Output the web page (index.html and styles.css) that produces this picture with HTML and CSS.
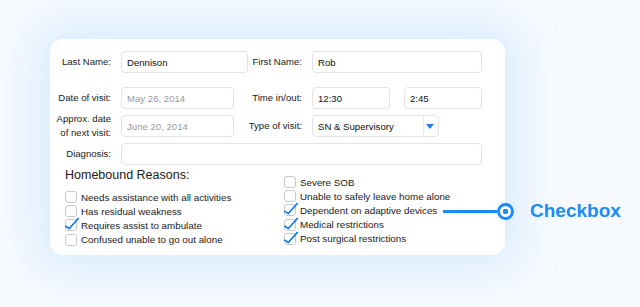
FILE: index.html
```html
<!DOCTYPE html>
<html lang="en">
<head>
    <meta charset="UTF-8">
    <meta name="viewport" content="width=device-width, initial-scale=1.0">
    <title>Visit Form</title>
    <link rel="stylesheet" href="styles.css">
</head>
<body>
    <div class="stage">
        <div class="card">
            <div class="form-grid">
                <div class="label">Last Name:</div>
                <div class="input">Dennison</div>
                <div class="label">First Name:</div>
                <div class="input">Rob</div>

                <div class="label">Date of visit:</div>
                <div class="input input-short muted">May 26, 2014</div>
                <div class="label">Time in/out:</div>
                <div class="pair">
                    <div class="input">12:30</div>
                    <div class="input">2:45</div>
                </div>

                <div class="label">Approx. date<br>of next visit:</div>
                <div class="input input-short muted">June 20, 2014</div>
                <div class="label">Type of visit:</div>
                <div class="input select">
                    <span class="select-value">SN &amp; Supervisory</span>
                    <span class="select-arrow"></span>
                </div>

                <div class="label">Diagnosis:</div>
                <div class="input span-3"></div>
            </div>

            <div class="reasons">
                <div class="reasons-col">
                    <div class="reasons-title">Homebound Reasons:</div>
                    <div class="check-item"><span class="box"></span>Needs assistance with all activities</div>
                    <div class="check-item"><span class="box"></span>Has residual weakness</div>
                    <div class="check-item"><span class="box checked"></span>Requires assist to ambulate</div>
                    <div class="check-item"><span class="box"></span>Confused unable to go out alone</div>
                </div>
                <div class="reasons-col right">
                    <div class="check-item"><span class="box"></span>Severe SOB</div>
                    <div class="check-item"><span class="box"></span>Unable to safely leave home alone</div>
                    <div class="check-item"><span class="box checked"></span>Dependent on adaptive devices</div>
                    <div class="check-item"><span class="box checked"></span>Medical restrictions</div>
                    <div class="check-item"><span class="box checked"></span>Post surgical restrictions</div>
                </div>
            </div>
        </div>

        <!-- callout pointing at the checkbox rows -->
        <div class="callout">
            <span class="callout-line"></span>
            <span class="callout-dot"></span>
            <span class="callout-text">Checkbox</span>
        </div>
    </div>
</body>
</html>
```

FILE: styles.css
```css
body {
    margin: 0;
    padding: 0;
    width: 640px;
    height: 307px;
    overflow: hidden;
    background-color: #f6faff;
    font-family: 'Liberation Sans', Arial, sans-serif;
    color: #222;
}

.stage {
    position: relative;
    height: 307px;
}

.card {
    position: absolute;
    left: 50px;
    top: 39px;
    width: 455px;
    height: 216px;
    box-sizing: border-box;
    padding-top: 12px;
    background-color: #fff;
    border-radius: 13px;
    box-shadow: 0 0 40px 14px rgba(205, 230, 252, 0.7);
}

.form-grid {
    display: grid;
    grid-template-columns: 71px 127px 64px 170px;
    grid-template-rows: 30px 22px 22px 22px;
    row-gap: 6px;
    align-items: start;
}

.label {
    height: 22px;
    display: flex;
    align-items: center;
    justify-content: flex-end;
    padding-right: 10px;
    text-align: right;
    font-size: 9.6px;
    line-height: 14px;
    white-space: nowrap;
    color: #222;
}

.input {
    height: 22px;
    box-sizing: border-box;
    border: 1px solid #e3e3e3;
    border-radius: 4px;
    padding-left: 5px;
    display: flex;
    align-items: center;
    font-size: 9.6px;
    color: #111;
}

.input-short {
    width: 113px;
}

.muted {
    color: #9a9a9a;
}

.pair {
    display: flex;
    gap: 14px;
}

.pair .input {
    width: 78px;
}

.select {
    width: 127px;
    padding-right: 0;
}

.select-value {
    flex: 1;
}

.select-arrow {
    width: 14px;
    height: 20px;
    border-left: 1px solid #ececec;
    position: relative;
}

.select-arrow::after {
    content: "";
    position: absolute;
    left: 2px;
    top: 8px;
    border-left: 4px solid transparent;
    border-right: 4px solid transparent;
    border-top: 5px solid #1d7ff2;
}

.span-3 {
    grid-column: 2 / 5;
}

.reasons {
    display: flex;
    padding-left: 15px;
    margin-top: 2px;
}

.reasons-col {
    width: 219px;
}

.reasons-col.right {
    padding-top: 8px;
}

.reasons-title {
    font-size: 12.5px;
    line-height: 16px;
    color: #1a1a1a;
    margin-bottom: 7px;
}

.check-item {
    display: flex;
    align-items: center;
    height: 14.2px;
    font-size: 9.8px;
    color: #1a1a1a;
    white-space: nowrap;
}

.box {
    position: relative;
    width: 12px;
    height: 12px;
    box-sizing: border-box;
    border: 1px solid #c9c9c9;
    border-radius: 3px;
    margin-right: 4px;
    flex-shrink: 0;
}

.box.checked::after {
    content: "";
    position: absolute;
    left: 3px;
    top: -5px;
    width: 4px;
    height: 13px;
    border-right: 2.5px solid #1a7cf0;
    border-bottom: 2.5px solid #1a7cf0;
    transform: rotate(32deg) skewX(-10deg);
    border-radius: 0 0 1px 0;
}

.callout {
    position: absolute;
    left: 443px;
    top: 201px;
    display: flex;
    align-items: center;
    height: 20px;
}

.callout-line {
    width: 54px;
    height: 3px;
    background-color: #1a8cf6;
}

.callout-dot {
    width: 11px;
    height: 11px;
    border: 3px solid #1a8cf6;
    border-radius: 50%;
    background: radial-gradient(circle, #1a8cf6 0 2.6px, #fff 3px);
}

.callout-text {
    margin-left: 16px;
    font-size: 19px;
    font-weight: bold;
    color: #1a8cf6;
}
```
